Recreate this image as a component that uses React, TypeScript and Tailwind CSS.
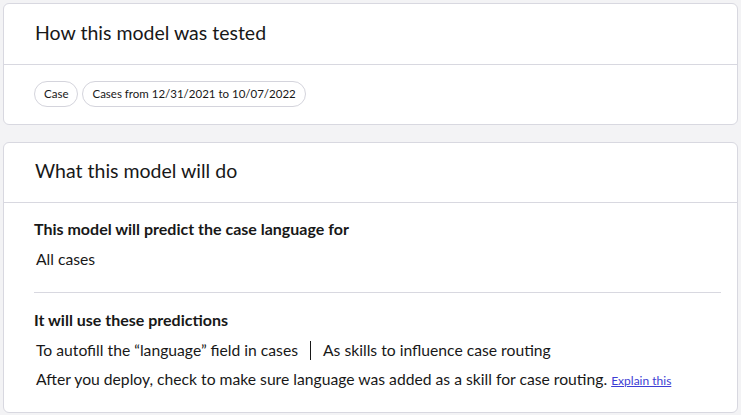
import { FC } from "react";

const Pill: FC<{ label: string }> = ({ label }) => (
  <span className="inline-flex items-center h-[26px] px-[9px] rounded-full border border-[#d4d4dc] text-[11.5px] text-[#181818]">
    {label}
  </span>
);

const App: FC = () => {
  return (
    <div
      className="w-[741px] h-[415px] bg-[#f3f3f5] pt-[3px] px-[3px] flex flex-col gap-[17px] text-[#181818]"
      style={{ fontFamily: "Lato, 'Noto Sans', sans-serif" }}
    >
      <section className="w-[735px] bg-white border border-[#d8d8e0] rounded-[6px]">
        <div className="h-[61px] flex items-center px-[31px] pb-[3px] border-b border-[#d8d8e0]">
          <h2 className="text-[19.5px] leading-none">How this model was tested</h2>
        </div>
        <div className="flex gap-[4px] px-[30px] pt-[16px] pb-[17px]">
          <Pill label="Case" />
          <Pill label="Cases from 12/31/2021 to 10/07/2022" />
        </div>
      </section>

      <section className="w-[735px] bg-white border border-[#d8d8e0] rounded-[6px]">
        <div className="h-[60px] flex items-center px-[31px] pb-[3px] border-b border-[#d8d8e0]">
          <h2 className="text-[19.5px] leading-none">What this model will do</h2>
        </div>
        <div className="px-[30px] pt-[14px] pb-[17px]">
          <div className="pb-[19px] border-b border-[#d8d8e0] mr-[-14px]">
            <h3 className="text-[16px] font-bold leading-[24px]">
              This model will predict the case language for
            </h3>
            <p className="mt-[4px] text-[15.7px] leading-[28px] pl-[2px]">All cases</p>
          </div>
          <div className="pt-[15px]">
            <h3 className="text-[16px] font-bold leading-[24px]">It will use these predictions</h3>
            <div className="mt-[3px] flex items-center text-[15.7px] leading-[30px] pl-[2px]">
              <span>To autofill the “language” field in cases</span>
              <span className="mx-[12px] w-px h-[19px] bg-[#181818]" />
              <span>As skills to influence case routing</span>
            </div>
            <p className="text-[15.7px] leading-[28px] pl-[2px]">
              After you deploy, check to make sure language was added as a skill for case routing.{" "}
              <a href="#" className="text-[12px] text-[#3d3dd4] underline">
                Explain this
              </a>
            </p>
          </div>
        </div>
      </section>
    </div>
  );
};

export default App;
